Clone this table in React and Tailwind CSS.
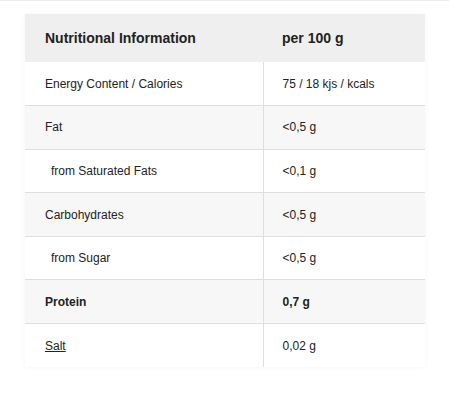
import React from 'react';

const rows = [
  { label: 'Energy Content / Calories', value: '75 / 18 kjs / kcals' },
  { label: 'Fat', value: '<0,5 g', shade: true },
  { label: 'from Saturated Fats', value: '<0,1 g', indent: true },
  { label: 'Carbohydrates', value: '<0,5 g', shade: true },
  { label: 'from Sugar', value: '<0,5 g', indent: true },
  { label: 'Protein', value: '0,7 g', shade: true, bold: true },
  { label: 'Salt', value: '0,02 g', underline: true },
];

export default function App() {
  return (
    <div className="w-[449px] h-[409px] bg-white border-t border-[#ececec] pt-[13px] pl-[25px] font-['Liberation_Sans',Arial,sans-serif] text-[#222]">
      <table className="w-[400px] border-collapse shadow-[0_0_6px_rgba(0,0,0,0.04)]">
        <thead>
          <tr className="bg-[#efefef] h-[48px]">
            <th className="w-[238px] pl-[20px] text-left text-[14px] font-bold">Nutritional Information</th>
            <th className="pl-[19px] text-left text-[14px] font-bold">per 100 g</th>
          </tr>
        </thead>
        <tbody>
          {rows.map((r, i) => (
            <tr
              key={r.label}
              className={`h-[43.6px] text-[12px] ${r.shade ? 'bg-[#f7f7f7]' : 'bg-white'} ${i < rows.length - 1 ? 'border-b border-[#dedede]' : ''}`}
            >
              <td className={`border-r border-[#dedede] ${r.indent ? 'pl-[26px]' : 'pl-[20px]'} ${r.bold ? 'font-bold' : ''}`}>
                <span className={r.underline ? 'underline' : ''}>{r.label}</span>
              </td>
              <td className={`pl-[19px] ${r.bold ? 'font-bold' : ''}`}>{r.value}</td>
            </tr>
          ))}
        </tbody>
      </table>
    </div>
  );
}
